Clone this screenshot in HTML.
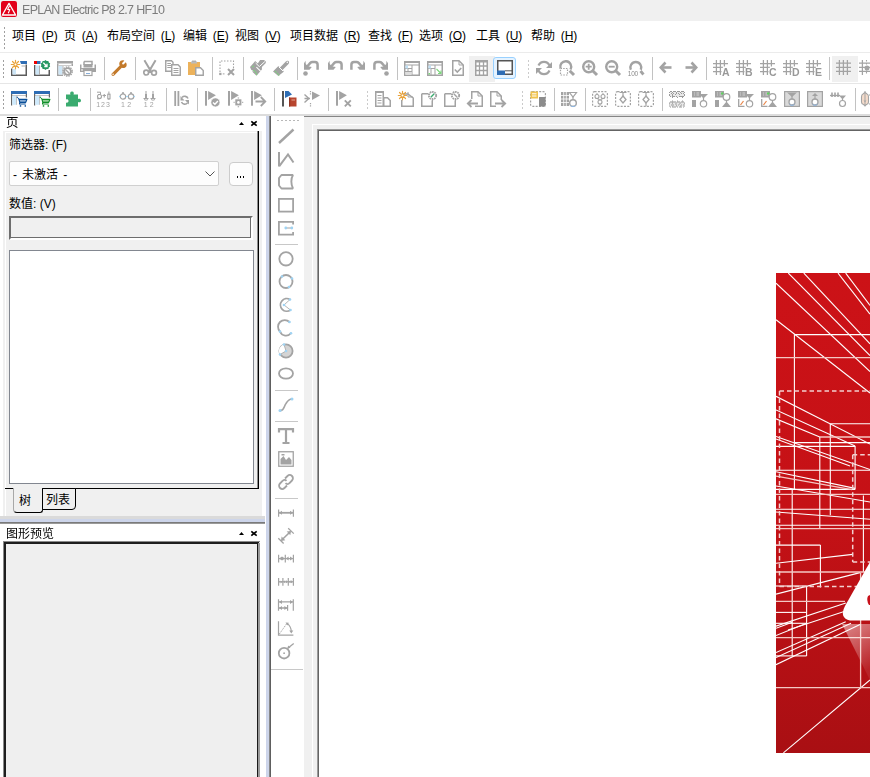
<!DOCTYPE html>
<html lang="zh-CN">
<head>
<meta charset="utf-8">
<style>
html,body{margin:0;padding:0}
body{width:870px;height:777px;overflow:hidden;position:relative;background:#fff;font-family:"Liberation Sans",sans-serif;font-size:12px;color:#000}
.a{position:absolute}
.t{position:absolute;white-space:nowrap;line-height:14px}
.sep{position:absolute;width:1px;background:#c2c2c2}
.grip{position:absolute;width:1px;background-image:linear-gradient(#a0a0a0 40%,transparent 40%);background-size:1px 4px}
.hgrip{position:absolute;height:1px;background-image:linear-gradient(90deg,#b8b8b8 40%,transparent 40%);background-size:4px 1px}
svg{position:absolute;overflow:visible}
.nolcd{will-change:transform}
</style>
</head>
<body>
<div class="a" style="left:0px;top:0px;width:870px;height:21px;background:#f0f0f0;"></div>
<svg style="left:1px;top:1px" width="16" height="16" viewBox="0 0 16 16">
<rect x="0" y="0" width="16" height="16" rx="2.2" fill="#e2001a"/>
<path d="M8 2.4 L14.6 14 L1.4 14 Z" fill="none" stroke="#fff" stroke-width="1.3" stroke-linejoin="round"/>
<path d="M8.6 4.8 L6.7 8.3 L8.7 8.6 L7.3 12.2" fill="none" stroke="#fff" stroke-width="1.1"/>
</svg>
<div class="t" style="left:22px;top:3px;font-size:12.5px;color:#7c7c7c;letter-spacing:-0.65px;will-change:transform">EPLAN Electric P8 2.7 HF10</div>
<div class="a" style="left:0px;top:52px;width:870px;height:1px;background:#ebebeb;"></div>
<div class="grip" style="left:4px;top:27px;height:22px"></div>
<div class="t" style="left:12.3px;top:29px;word-spacing:2px">项目 (<u>P</u>)</div>
<div class="t" style="left:64.3px;top:29px;word-spacing:2px">页 (<u>A</u>)</div>
<div class="t" style="left:107.3px;top:29px;word-spacing:2px">布局空间 (<u>L</u>)</div>
<div class="t" style="left:183.3px;top:29px;word-spacing:2px">编辑 (<u>E</u>)</div>
<div class="t" style="left:235.3px;top:29px;word-spacing:2px">视图 (<u>V</u>)</div>
<div class="t" style="left:290.3px;top:29px;word-spacing:2px">项目数据 (<u>R</u>)</div>
<div class="t" style="left:368.3px;top:29px;word-spacing:2px">查找 (<u>F</u>)</div>
<div class="t" style="left:419.3px;top:29px;word-spacing:2px">选项 (<u>O</u>)</div>
<div class="t" style="left:476.3px;top:29px;word-spacing:2px">工具 (<u>U</u>)</div>
<div class="t" style="left:531.3px;top:29px;word-spacing:2px">帮助 (<u>H</u>)</div>
<div class="a" style="left:0px;top:83px;width:870px;height:1px;background:#e6e6e6;"></div>
<div class="a" style="left:0px;top:114px;width:870px;height:2px;background:#dcdcdc;"></div>
<div class="grip" style="left:3px;top:60px;height:20px"></div>
<div class="grip" style="left:3px;top:91px;height:20px"></div>
<div class="a" style="left:469px;top:56px;width:26px;height:26px;background:#f0f0f0;"></div>
<div class="a" style="left:493px;top:57px;width:23px;height:22px;background:#e5f3ff;border:1px solid #99d1ff;border-radius:3px;box-sizing:border-box"></div>
<div class="a" style="left:832px;top:56px;width:26px;height:26px;background:#f0f0f0;"></div>
<svg class="nolcd" style="left:11px;top:60px" width="16" height="16" viewBox="0 0 16 16">
<path d="M0.75 8.5V15.25H15.25V4.5" fill="none" stroke="#5c5c5c" stroke-width="1.5"/>
<rect x="1.5" y="9" width="3.5" height="5.5" fill="#cde6f7"/>
<path d="M9 1H16V4H10Z" fill="#2e6db4"/>
<rect x="10.5" y="5.5" width="4.5" height="1" fill="#b0b0b0"/>
<g stroke="#e9a33b" stroke-width="1.2" stroke-linecap="round">
<path d="M4.5 0.3V8.7M0.3 4.5H8.7M1.5 1.5L7.5 7.5M7.5 1.5L1.5 7.5"/></g>
<circle cx="4.5" cy="4.5" r="1.4" fill="#fff" stroke="#e9a33b" stroke-width="1"/>
</svg>
<svg class="nolcd" style="left:34px;top:60px" width="16" height="16" viewBox="0 0 16 16">
<path d="M0.75 5V15.25H15.25V10" fill="none" stroke="#5c5c5c" stroke-width="1.5"/>
<rect x="1.5" y="5.5" width="3.5" height="9" fill="#cde6f7"/>
<rect x="5" y="5.5" width="1" height="9" fill="#b0b0b0"/>
<rect x="0" y="1" width="3" height="3" fill="#ee0000"/>
<rect x="3" y="1" width="3.5" height="3" fill="#2e6db4"/>
<path d="M11.5 0 L12.7 1 L14.4 0.9 L14.8 2.5 L16.2 3.4 L15.6 5 L16.2 6.6 L14.8 7.5 L14.4 9.1 L12.7 9 L11.5 10 L10.3 9 L8.6 9.1 L8.2 7.5 L6.8 6.6 L7.4 5 L6.8 3.4 L8.2 2.5 L8.6 0.9 L10.3 1Z" fill="#279862"/>
<path d="M9.3 2.8L13 6.5M13 3.8V6.5H10.3" fill="none" stroke="#fff" stroke-width="1.3"/>
</svg>
<svg class="nolcd" style="left:57px;top:60px" width="16" height="16" viewBox="0 0 16 16">
<rect x="0" y="1" width="16" height="2.5" fill="#a3a3a3"/>
<path d="M0.75 3.5V15.25H6M15.25 3.5V6" fill="none" stroke="#a3a3a3" stroke-width="1.5"/>
<rect x="1.5" y="6" width="4" height="8.5" fill="#cde6f7"/>
<rect x="5.5" y="6" width="1" height="8.5" fill="#b8b8b8"/>
<rect x="1.5" y="5" width="13" height="0.8" fill="#c0c0c0"/>
<circle cx="10.6" cy="11.5" r="4.6" fill="none" stroke="#a3a3a3" stroke-width="1.4" stroke-dasharray="1.5 0.9"/>
<circle cx="10.6" cy="11.5" r="3.3" fill="#fff" stroke="#a3a3a3" stroke-width="1.8"/>
<path d="M9 10L12.2 13.2" stroke="#a3a3a3" stroke-width="1.3"/>
</svg>
<svg class="nolcd" style="left:80px;top:60px" width="16" height="16" viewBox="0 0 16 16">
<path d="M4 1.5H12V5" fill="none" stroke="#a3a3a3" stroke-width="1.5"/><path d="M4 1.5V5" stroke="#a3a3a3" stroke-width="1.5"/>
<rect x="3.5" y="4" width="9" height="3.5" fill="#a3a3a3"/>
<rect x="0" y="4.5" width="1.5" height="7.5" fill="#a3a3a3"/><rect x="14.5" y="4.5" width="1.5" height="7.5" fill="#a3a3a3"/>
<rect x="0" y="8" width="16" height="4" fill="#a3a3a3"/>
<rect x="1" y="9.5" width="2" height="1" fill="#fff"/>
<rect x="4" y="10.5" width="8" height="5" fill="#fff" stroke="#a3a3a3" stroke-width="1.2"/>
<rect x="6" y="13" width="4" height="0.8" fill="#6a9ad0"/>
</svg>
<div class="sep" style="left:104px;top:57px;height:23px"></div>
<svg class="nolcd" style="left:111px;top:60px" width="16" height="16" viewBox="0 0 16 16">
<path d="M14.8 2.2 L12.6 4.4 L11.3 4.2 L11.1 2.9 L13.3 0.7 C11.5 -0.2 9.2 0.6 8.5 2.6 C8.1 3.6 8.3 4.7 8.7 5.5 L1 13.2 C0.3 13.9 0.3 15 1 15.5 C1.6 16.1 2.6 16 3.2 15.4 L10.8 7.7 C11.7 8.1 12.8 8.2 13.8 7.8 C15.7 7 16.4 4.2 14.8 2.2Z" fill="#c37a2b"/>
<circle cx="2.1" cy="14.3" r="0.8" fill="#fff"/>
</svg>
<div class="sep" style="left:135px;top:57px;height:23px"></div>
<svg class="nolcd" style="left:142px;top:60px" width="16" height="16" viewBox="0 0 16 16">
<path d="M2.4 0.3 L7.3 8.5 M13.6 0.3 L8.7 8.5" stroke="#a3a3a3" stroke-width="2"/>
<rect x="6.6" y="7.5" width="2.9" height="5.5" fill="#a3a3a3"/>
<circle cx="4.2" cy="12.6" r="2.4" fill="none" stroke="#a3a3a3" stroke-width="1.7"/>
<circle cx="12" cy="12.7" r="2.4" fill="none" stroke="#a3a3a3" stroke-width="1.7"/>
</svg>
<svg class="nolcd" style="left:165px;top:60px" width="16" height="16" viewBox="0 0 16 16">
<path d="M0.75 0.75H6.5L8 2.3V11.25H0.75Z" fill="#fff" stroke="#a3a3a3" stroke-width="1.4"/>
<path d="M2.3 3.5H6M2.3 5.5H6M2.3 7.5H6" stroke="#a3a3a3" stroke-width="1"/>
<path d="M6.75 4.75H13L15.25 7V15.25H6.75Z" fill="#fff" stroke="#a3a3a3" stroke-width="1.4"/>
<path d="M8.5 8.5H13.5M8.5 10.5H13.5M8.5 12.5H13.5" stroke="#a3a3a3" stroke-width="1"/>
</svg>
<svg class="nolcd" style="left:188px;top:60px" width="16" height="16" viewBox="0 0 16 16">
<rect x="0" y="2" width="12" height="13" fill="#ecb25b"/>
<path d="M4 1.3H8" stroke="#a3a3a3" stroke-width="1.4"/>
<rect x="3" y="1.5" width="6" height="2" fill="#bbb"/>
<path d="M7.75 7.75H12.5L15.25 10.5V15.25H7.75Z" fill="#fff" stroke="#a3a3a3" stroke-width="1.4"/>
</svg>
<div class="sep" style="left:212px;top:57px;height:23px"></div>
<svg class="nolcd" style="left:219px;top:60px" width="16" height="16" viewBox="0 0 16 16">
<path d="M1 12V1H14.5V8" fill="none" stroke="#a3a3a3" stroke-width="1.1" stroke-dasharray="1.5 1.5"/>
<rect x="0.2" y="12.8" width="2.3" height="2.3" fill="#a3a3a3"/>
<path d="M3.8 13.9H5.5" stroke="#a3a3a3" stroke-width="1"/>
<path d="M9 9L15 15M15 9L9 15" stroke="#a3a3a3" stroke-width="2"/>
</svg>
<div class="sep" style="left:243px;top:57px;height:23px"></div>
<svg class="nolcd" style="left:250px;top:60px" width="16" height="16" viewBox="0 0 16 16">
<path d="M0 7 L4.4 2.1 L5.2 1.1 L7.8 3.6 L10.1 0 L14 0 L15.8 1.6 L15.8 3.1 L11.9 7 L11.9 9.6 L6.5 15.8 L2.8 12.2 L2.2 10.5 L1.2 9.8Z" fill="#a3a3a3"/>
<path d="M5.6 3 L9.3 6.6 L14.8 1.6" fill="none" stroke="#fff" stroke-width="1"/>
<path d="M6.4 7.2 L10.8 11.3" stroke="#fff" stroke-width="1.1"/>
<path d="M2 10.2 L3.3 11.5" stroke="#fff" stroke-width="0.6"/>
<rect x="2.3" y="5.8" width="1.5" height="1.3" fill="#7cd67c"/><rect x="3.3" y="10" width="1.5" height="1.3" fill="#7cd67c"/><rect x="5" y="11.5" width="1.2" height="1.5" fill="#7cd67c"/><rect x="6" y="13.5" width="1.2" height="1.5" fill="#7cd67c"/>
</svg>
<svg class="nolcd" style="left:273px;top:60px" width="16" height="16" viewBox="0 0 16 16">
<path d="M0 11.5 L5.4 6 L11 11.5 L5.4 16Z" fill="#a3a3a3"/>
<path d="M6.5 8 L9 10.5 L15.5 4 C16.5 3 16.3 1.2 15 0.8 C14 0.5 13.3 1 12.8 1.5Z" fill="#a3a3a3"/>
<path d="M5.8 6.8 L10.2 11.2" stroke="#fff" stroke-width="1"/>
<circle cx="14.3" cy="2.3" r="0.8" fill="#fff"/>
<rect x="2" y="11" width="1.3" height="1.3" fill="#7cd67c"/><rect x="3.8" y="12.8" width="1.3" height="1.3" fill="#7cd67c"/><rect x="5.2" y="14.4" width="1.2" height="1.2" fill="#7cd67c"/>
</svg>
<div class="sep" style="left:297px;top:57px;height:23px"></div>
<svg class="nolcd" style="left:303px;top:60px" width="16" height="16" viewBox="0 0 16 16"><path d="M1 3.2 L2.5 0.8 L2.8 4 L4.8 6.3 L8.8 7 L6.5 9.8 L1 9.8Z" fill="#a3a3a3"/>
<path d="M4 6.8 L7.3 2.9 Q8.2 2 9.5 2 H12 Q14.6 2 14.6 4.8 V9.8" fill="none" stroke="#a3a3a3" stroke-width="2.5"/><circle cx="2.5" cy="13.5" r="2.3" fill="#a3a3a3"/></svg>
<svg class="nolcd" style="left:327px;top:60px" width="16" height="16" viewBox="0 0 16 16"><path d="M1 3.2 L2.5 0.8 L2.8 4 L4.8 6.3 L8.8 7 L6.5 9.8 L1 9.8Z" fill="#a3a3a3"/>
<path d="M4 6.8 L7.3 2.9 Q8.2 2 9.5 2 H12 Q14.6 2 14.6 4.8 V9.8" fill="none" stroke="#a3a3a3" stroke-width="2.5"/></svg>
<svg class="nolcd" style="left:350px;top:60px" width="16" height="16" viewBox="0 0 16 16"><g transform="translate(16,0) scale(-1,1)"><path d="M1 3.2 L2.5 0.8 L2.8 4 L4.8 6.3 L8.8 7 L6.5 9.8 L1 9.8Z" fill="#a3a3a3"/>
<path d="M4 6.8 L7.3 2.9 Q8.2 2 9.5 2 H12 Q14.6 2 14.6 4.8 V9.8" fill="none" stroke="#a3a3a3" stroke-width="2.5"/></g></svg>
<svg class="nolcd" style="left:373px;top:60px" width="16" height="16" viewBox="0 0 16 16"><g transform="translate(16,0) scale(-1,1)"><path d="M1 3.2 L2.5 0.8 L2.8 4 L4.8 6.3 L8.8 7 L6.5 9.8 L1 9.8Z" fill="#a3a3a3"/>
<path d="M4 6.8 L7.3 2.9 Q8.2 2 9.5 2 H12 Q14.6 2 14.6 4.8 V9.8" fill="none" stroke="#a3a3a3" stroke-width="2.5"/><circle cx="2.5" cy="13.5" r="2.3" fill="#a3a3a3"/></g></svg>
<div class="sep" style="left:397px;top:57px;height:23px"></div>
<svg class="nolcd" style="left:404px;top:60px" width="16" height="16" viewBox="0 0 16 16">
<rect x="0.75" y="1.75" width="14.5" height="13.5" fill="#fff" stroke="#a3a3a3" stroke-width="1.5"/>
<rect x="0" y="1" width="16" height="2" fill="#a3a3a3"/>
<path d="M1 5H15M1 8.5H8M8 5V15M4 8.5V15M1 11.5H8" stroke="#a3a3a3" stroke-width="1"/>
<rect x="1.5" y="5.5" width="2.5" height="3" fill="#bfe0f5"/><rect x="1.5" y="12" width="6" height="3" fill="#ddd"/>
</svg>
<svg class="nolcd" style="left:427px;top:60px" width="16" height="16" viewBox="0 0 16 16">
<rect x="0.75" y="1.75" width="14.5" height="13.5" fill="#fff" stroke="#a3a3a3" stroke-width="1.5"/>
<rect x="0" y="1" width="16" height="2" fill="#a3a3a3"/>
<path d="M1 5H15M1 8.5H8M8 5V15M4 8.5V15" stroke="#a3a3a3" stroke-width="1"/>
<rect x="1.5" y="5.5" width="2.5" height="3" fill="#bfe0f5"/>
<path d="M9.5 9 L14 13.5 M14 10.5V13.5H11" fill="none" stroke="#7cd67c" stroke-width="1.1"/>
<rect x="1.5" y="13" width="1.5" height="1.5" fill="#7cd67c"/>
</svg>
<svg class="nolcd" style="left:450px;top:60px" width="16" height="16" viewBox="0 0 16 16">
<path d="M2.75 0.75H9L13.25 5V15.25H2.75Z" fill="#fff" stroke="#a3a3a3" stroke-width="1.5"/>
<path d="M9 1V5H13" fill="none" stroke="#a3a3a3" stroke-width="1"/>
<path d="M4.8 9.5L7.3 12L11.3 8" fill="none" stroke="#a3a3a3" stroke-width="1.6"/>
</svg>
<svg class="nolcd" style="left:475px;top:60px" width="16" height="16" viewBox="0 0 16 16">
<rect x="0" y="0" width="13" height="2" fill="#a3a3a3"/>
<rect x="0.75" y="1.75" width="11.5" height="13.5" fill="#fff" stroke="#a3a3a3" stroke-width="1.5"/>
<path d="M1 6H12M1 10.5H12M4.5 2V15M8.5 2V15" stroke="#a3a3a3" stroke-width="1.3"/>
</svg>
<svg class="nolcd" style="left:497px;top:60px" width="16" height="16" viewBox="0 0 16 16">
<rect x="0.75" y="0.75" width="14.5" height="13.5" fill="#fff" stroke="#555" stroke-width="1.5"/>
<rect x="0" y="10.5" width="8" height="4.5" fill="#2e6db4"/>
<path d="M8 10.8H15.5" stroke="#555" stroke-width="1"/>
</svg>
<div class="grip" style="left:528px;top:60px;height:20px;opacity:0.55"></div>
<svg class="nolcd" style="left:536px;top:60px" width="16" height="16" viewBox="0 0 16 16">
<path d="M13.5 5.5 A6 6 0 0 0 2.5 5.5" fill="none" stroke="#a3a3a3" stroke-width="2.2"/>
<path d="M2.5 10.5 A6 6 0 0 0 13.5 10.5" fill="none" stroke="#a3a3a3" stroke-width="2.2"/>
<path d="M16 2 V8 H10Z" fill="#a3a3a3"/><path d="M0 14 V8 H6Z" fill="#a3a3a3"/>
</svg>
<svg class="nolcd" style="left:559px;top:60px" width="16" height="16" viewBox="0 0 16 16">
<path d="M1.5 8.5 A5.5 5.5 0 1 1 11.5 9.5" fill="none" stroke="#a3a3a3" stroke-width="2.4"/>
<path d="M10.7 10.7L15 15" stroke="#a3a3a3" stroke-width="3"/>
<rect x="1.5" y="8.5" width="7" height="6.5" fill="#fff" stroke="#a3a3a3" stroke-width="1.2" stroke-dasharray="1.5 1.2"/>
</svg>
<svg class="nolcd" style="left:582px;top:60px" width="16" height="16" viewBox="0 0 16 16">
<circle cx="6.7" cy="6.7" r="5.5" fill="none" stroke="#a3a3a3" stroke-width="2.4"/>
<path d="M10.7 10.7L15 15" stroke="#a3a3a3" stroke-width="3"/>
<path d="M3.7 6.7H9.7M6.7 3.7V9.7" stroke="#a3a3a3" stroke-width="1.8"/>
</svg>
<svg class="nolcd" style="left:605px;top:60px" width="16" height="16" viewBox="0 0 16 16">
<circle cx="6.7" cy="6.7" r="5.5" fill="none" stroke="#a3a3a3" stroke-width="2.4"/>
<path d="M10.7 10.7L15 15" stroke="#a3a3a3" stroke-width="3"/>
<path d="M3.7 6.7H9.7" stroke="#a3a3a3" stroke-width="1.8"/>
</svg>
<svg class="nolcd" style="left:628px;top:60px" width="16" height="16" viewBox="0 0 16 16">
<path d="M2.8 9.8 A5.5 5.5 0 1 1 12.8 9.8" fill="none" stroke="#a3a3a3" stroke-width="2.4"/>
<path d="M12.5 11L15.5 14.5" stroke="#a3a3a3" stroke-width="2.8"/>
<text x="-0.2" y="15.8" font-family="Liberation Sans" font-size="6.5" fill="#8a8a8a" letter-spacing="-0.3">100</text>
</svg>
<div class="sep" style="left:652px;top:57px;height:23px"></div>
<svg class="nolcd" style="left:659px;top:61px" width="16" height="16" viewBox="0 0 16 16"><path d="M6.5 1.5L1.8 6.5L6.5 11.5" fill="none" stroke="#a3a3a3" stroke-width="2.6"/><path d="M2.5 6.5H12.5" stroke="#a3a3a3" stroke-width="2.6"/></svg>
<svg class="nolcd" style="left:682px;top:61px" width="16" height="16" viewBox="0 0 16 16"><path d="M9.5 1.5L14.2 6.5L9.5 11.5" fill="none" stroke="#a3a3a3" stroke-width="2.6"/><path d="M13.5 6.5H3.5" stroke="#a3a3a3" stroke-width="2.6"/></svg>
<div class="sep" style="left:706px;top:57px;height:23px"></div>
<svg class="nolcd" style="left:712px;top:60px" width="16" height="16" viewBox="0 0 16 16">
<path d="M1 3.5H16M1 7.4H11M1 11.5H10M4.4 0V15M8.4 0V15M12.4 0V6.6" stroke="#a3a3a3" stroke-width="1.25"/>
<rect x="9.5" y="7.8" width="8" height="8.5" fill="#fff"/>
<text x="10" y="16.2" font-family="Liberation Sans" font-weight="bold" font-size="10.5" fill="#999">A</text>
</svg>
<svg class="nolcd" style="left:735px;top:60px" width="16" height="16" viewBox="0 0 16 16">
<path d="M1 3.5H16M1 7.4H11M1 11.5H10M4.4 0V15M8.4 0V15M12.4 0V6.6" stroke="#a3a3a3" stroke-width="1.25"/>
<rect x="9.5" y="7.8" width="8" height="8.5" fill="#fff"/>
<text x="10" y="16.2" font-family="Liberation Sans" font-weight="bold" font-size="10.5" fill="#999">B</text>
</svg>
<svg class="nolcd" style="left:759px;top:60px" width="16" height="16" viewBox="0 0 16 16">
<path d="M1 3.5H16M1 7.4H11M1 11.5H10M4.4 0V15M8.4 0V15M12.4 0V6.6" stroke="#a3a3a3" stroke-width="1.25"/>
<rect x="9.5" y="7.8" width="8" height="8.5" fill="#fff"/>
<text x="10" y="16.2" font-family="Liberation Sans" font-weight="bold" font-size="10.5" fill="#999">C</text>
</svg>
<svg class="nolcd" style="left:782px;top:60px" width="16" height="16" viewBox="0 0 16 16">
<path d="M1 3.5H16M1 7.4H11M1 11.5H10M4.4 0V15M8.4 0V15M12.4 0V6.6" stroke="#a3a3a3" stroke-width="1.25"/>
<rect x="9.5" y="7.8" width="8" height="8.5" fill="#fff"/>
<text x="10" y="16.2" font-family="Liberation Sans" font-weight="bold" font-size="10.5" fill="#999">D</text>
</svg>
<svg class="nolcd" style="left:805px;top:60px" width="16" height="16" viewBox="0 0 16 16">
<path d="M1 3.5H16M1 7.4H11M1 11.5H10M4.4 0V15M8.4 0V15M12.4 0V6.6" stroke="#a3a3a3" stroke-width="1.25"/>
<rect x="9.5" y="7.8" width="8" height="8.5" fill="#fff"/>
<text x="10" y="16.2" font-family="Liberation Sans" font-weight="bold" font-size="10.5" fill="#999">E</text>
</svg>
<div class="sep" style="left:829px;top:57px;height:23px"></div>
<svg class="nolcd" style="left:836px;top:60px" width="16" height="16" viewBox="0 0 16 16"><path d="M0 3.2H15M0 7.3H15M0 11.4H15M3.4 0V15M7.4 0V15M11.4 0V15" stroke="#a3a3a3" stroke-width="1.25"/></svg>
<svg class="nolcd" style="left:859px;top:60px" width="16" height="16" viewBox="0 0 16 16"><path d="M0 3.2H11M0 7.3H11M0 11.4H11M3.4 0V15" stroke="#a3a3a3" stroke-width="1.25"/><path d="M7.5 0V15" stroke="#a3a3a3" stroke-width="1.1" stroke-dasharray="1.5 1.5"/><circle cx="8" cy="8" r="2.5" fill="#a3a3a3"/></svg>
<svg class="nolcd" style="left:11px;top:91px" width="16" height="16" viewBox="0 0 16 16">
<rect x="0" y="0" width="16" height="3" fill="#2e6db4"/>
<rect x="1" y="4" width="14" height="0.7" fill="#aaa"/>
<path d="M0.6 3V14.5M15.4 3V6.5" stroke="#666" stroke-width="1.2"/>
<rect x="1.2" y="4.8" width="3.8" height="9" fill="#cfeafc"/>
<rect x="5" y="4.8" width="0.7" height="9" fill="#aaa"/>
<path d="M6 6 L8 8" stroke="#0b4f98" stroke-width="1.3" stroke-dasharray="1 0.7"/>
<path d="M8 8.4 H15.9 L14.7 11.4 H8.8 Z" fill="#88acd4" stroke="#0b4f98" stroke-width="1.2" stroke-linejoin="round"/>
<path d="M8.6 11.5 V13 H14.7" fill="none" stroke="#0b4f98" stroke-width="1.2"/>
<rect x="8.8" y="14.2" width="1.4" height="1.5" fill="#0b4f98"/><rect x="13.6" y="14.2" width="1.4" height="1.5" fill="#0b4f98"/>
</svg>
<svg class="nolcd" style="left:34px;top:91px" width="16" height="16" viewBox="0 0 16 16">
<rect x="0" y="0" width="16" height="3" fill="#2e6db4"/>
<rect x="1" y="4" width="14" height="0.7" fill="#aaa"/>
<path d="M0.6 3V14.5M15.4 3V6.5" stroke="#666" stroke-width="1.2"/>
<rect x="1.2" y="4.8" width="3.8" height="9" fill="#cfeafc"/>
<rect x="5" y="4.8" width="0.7" height="9" fill="#aaa"/>
<path d="M6 6 L8 8" stroke="#11902a" stroke-width="1.3" stroke-dasharray="1 0.7"/>
<path d="M8 8.4 H15.9 L14.7 11.4 H8.8 Z" fill="#8fcf95" stroke="#11902a" stroke-width="1.2" stroke-linejoin="round"/>
<path d="M8.6 11.5 V13 H14.7" fill="none" stroke="#11902a" stroke-width="1.2"/>
<rect x="8.8" y="14.2" width="1.4" height="1.5" fill="#11902a"/><rect x="13.6" y="14.2" width="1.4" height="1.5" fill="#11902a"/>
</svg>
<div class="sep" style="left:58px;top:88px;height:23px"></div>
<svg class="nolcd" style="left:65px;top:91px" width="16" height="16" viewBox="0 0 16 16">
<path d="M1 3.5 H5.5 C4.8 2.5 5 0.5 7 0.5 C9 0.5 9.2 2.5 8.5 3.5 H13 V8 C14 7.3 16 7.5 16 9.5 C16 11.5 14 11.7 13 11 V15.5 H1 V11.5 C2 12 3.5 11.7 3.5 10 C3.5 8.3 2 8 1 8.5 Z" fill="#3aab6f"/>
</svg>
<div class="sep" style="left:90px;top:88px;height:23px"></div>
<svg class="nolcd" style="left:96px;top:91px" width="16" height="16" viewBox="0 0 16 16">
<path d="M1 1.2H4.5V3.5M2 3.5H4.5M1 7.8H3.5" fill="none" stroke="#a3a3a3" stroke-width="1"/>
<circle cx="3.5" cy="5.5" r="2" fill="none" stroke="#a3a3a3" stroke-width="1.1"/>
<path d="M6.5 4.5H10M8.25 3V6.5" stroke="#a3a3a3" stroke-width="1.1"/>
<rect x="11.8" y="3.2" width="2.2" height="4.6" fill="none" stroke="#a3a3a3" stroke-width="1.1"/>
<path d="M12.9 0.5V3.2M12.9 7.8V9" stroke="#a3a3a3" stroke-width="1"/>
<text x="0.3" y="16" font-family="Liberation Sans" font-size="7" fill="#a3a3a3" letter-spacing="0.9">123</text>
</svg>
<svg class="nolcd" style="left:119px;top:91px" width="16" height="16" viewBox="0 0 16 16">
<circle cx="4" cy="5.5" r="2.7" fill="#fff" stroke="#a3a3a3" stroke-width="1.2"/>
<circle cx="12" cy="5.5" r="2.7" fill="#fff" stroke="#a3a3a3" stroke-width="1.2"/>
<path d="M4 1V3M12 1V3" stroke="#a3a3a3" stroke-width="1.5"/>
<path d="M7 5.5H9" stroke="#9fd4f5" stroke-width="1"/>
<circle cx="0.8" cy="5.5" r="0.8" fill="#9fd4f5"/><circle cx="15.2" cy="5.5" r="0.8" fill="#9fd4f5"/>
<text x="2" y="16" font-family="Liberation Sans" font-size="7" fill="#a3a3a3" letter-spacing="2.3">12</text>
</svg>
<svg class="nolcd" style="left:143px;top:91px" width="16" height="16" viewBox="0 0 16 16">
<path d="M3 0V3M10 0V3" stroke="#a3a3a3" stroke-width="1"/>
<rect x="2" y="3" width="2" height="4" fill="#a3a3a3"/><rect x="9" y="3" width="2" height="4" fill="#a3a3a3"/>
<path d="M0.5 7.5H5.5M7.5 7.5H12.5" stroke="#a3a3a3" stroke-width="1"/>
<path d="M1 8.5 Q3 10 5 8.5M8 8.5 Q10 10 12 8.5" fill="none" stroke="#a3a3a3" stroke-width="0.9"/>
<text x="0.8" y="16" font-family="Liberation Sans" font-size="7" fill="#a3a3a3" letter-spacing="2">12</text>
</svg>
<div class="sep" style="left:166px;top:88px;height:23px"></div>
<svg class="nolcd" style="left:174px;top:91px" width="16" height="16" viewBox="0 0 16 16">
<rect x="0.3" y="0" width="1.8" height="15" fill="#a3a3a3"/><rect x="3.5" y="0" width="1.8" height="15" fill="#a3a3a3"/>
<path d="M14 7.5 A3.6 3.6 0 0 0 8 6.5" fill="none" stroke="#a3a3a3" stroke-width="1.6"/>
<path d="M7.5 11 A3.6 3.6 0 0 0 13.5 12" fill="none" stroke="#a3a3a3" stroke-width="1.6"/>
<path d="M6.5 5V9.5H10.5Z" fill="#a3a3a3"/><path d="M15 13.5V9H11Z" fill="#a3a3a3"/>
</svg>
<div class="sep" style="left:197px;top:88px;height:23px"></div>
<svg class="nolcd" style="left:205px;top:91px" width="16" height="16" viewBox="0 0 16 16"><rect x="0" y="0" width="2" height="14.7" fill="#a3a3a3"/>
<path d="M3.1 0 L10.9 4.3 L3.1 8.9Z" fill="#a3a3a3"/><circle cx="10.4" cy="11.4" r="4.5" fill="#a3a3a3" stroke="#fff" stroke-width="0.6"/>
<path d="M8 11.5L9.9 13.3L12.9 10" fill="none" stroke="#fff" stroke-width="1.4"/></svg>
<svg class="nolcd" style="left:228px;top:91px" width="16" height="16" viewBox="0 0 16 16"><rect x="0" y="0" width="2" height="14.7" fill="#a3a3a3"/>
<path d="M3.1 0 L10.9 4.3 L3.1 8.9Z" fill="#a3a3a3"/><rect x="7" y="8" width="6.8" height="6.8" fill="#a3a3a3" stroke="#fff" stroke-width="0.6"/>
<path d="M10.4 6.6V16.2M5.6 11.4H15.2" stroke="#a3a3a3" stroke-width="1.4" stroke-dasharray="1 7.6"/>
<circle cx="10.4" cy="11.4" r="1.3" fill="#fff"/></svg>
<svg class="nolcd" style="left:251px;top:91px" width="16" height="16" viewBox="0 0 16 16"><rect x="0" y="0" width="2" height="14.7" fill="#a3a3a3"/>
<path d="M3.1 0 L10.9 4.3 L3.1 8.9Z" fill="#a3a3a3"/><path d="M9.8 6 L14.3 10.5 L9.8 15M14 10.5H4.5" fill="none" stroke="#fff" stroke-width="3.4"/><path d="M9.8 6 L14.3 10.5 L9.8 15M14 10.5H4.5" fill="none" stroke="#a3a3a3" stroke-width="1.8"/></svg>
<div class="sep" style="left:274px;top:88px;height:23px"></div>
<svg class="nolcd" style="left:282px;top:91px" width="16" height="16" viewBox="0 0 16 16"><rect x="0" y="0" width="2" height="15.5" fill="#555"/>
<path d="M3 0 L6.5 0 L10 3.5 L3 7Z" fill="#2e6db4"/>
<rect x="6.3" y="5.8" width="8.5" height="9.7" fill="#fff"/>
<rect x="7" y="6.5" width="7.5" height="9" fill="#b8452e"/><rect x="7" y="6.5" width="1.2" height="9" fill="#8e3322"/>
<path d="M9.5 9H13" stroke="#eec0b0" stroke-width="0.8"/></svg>
<svg class="nolcd" style="left:304px;top:91px" width="16" height="16" viewBox="0 0 16 16">
<path d="M6.5 0V3.5M6.5 12V16" stroke="#a3a3a3" stroke-width="1.2" stroke-dasharray="1.3 1"/>
<path d="M0.5 3.5L4.8 7.5L0.5 11.5" fill="none" stroke="#a3a3a3" stroke-width="1.4"/>
<path d="M0.5 7.5H6" stroke="#a3a3a3" stroke-width="1.5"/>
<path d="M8 0.5L16 4.5L8 9Z" fill="#a3a3a3"/>
</svg>
<div class="sep" style="left:328px;top:88px;height:23px"></div>
<svg class="nolcd" style="left:336px;top:91px" width="16" height="16" viewBox="0 0 16 16"><rect x="0" y="0" width="2" height="14.7" fill="#a3a3a3"/>
<path d="M3.1 0 L10.9 4.3 L3.1 8.9Z" fill="#a3a3a3"/><path d="M8.8 9.3L14.8 15.3M14.8 9.3L8.8 15.3" stroke="#fff" stroke-width="3.4"/><path d="M8.8 9.3L14.8 15.3M14.8 9.3L8.8 15.3" stroke="#a3a3a3" stroke-width="1.9"/></svg>
<div class="grip" style="left:367px;top:91px;height:20px;opacity:0.55"></div>
<svg class="nolcd" style="left:375px;top:91px" width="16" height="16" viewBox="0 0 16 16">
<rect x="0.75" y="0.75" width="7.5" height="14.5" fill="#fff" stroke="#a3a3a3" stroke-width="1.5"/>
<rect x="0" y="0" width="9" height="2" fill="#a3a3a3"/>
<path d="M2.5 4.5H6.5M2.5 7H6.5M2.5 9.5H6.5M2.5 12H6.5" stroke="#a3a3a3" stroke-width="1"/>
<path d="M8.75 6.75H12.5L15.25 9.5V15.25H8.75Z" fill="#fff" stroke="#a3a3a3" stroke-width="1.5"/>
</svg>
<svg class="nolcd" style="left:398px;top:91px" width="16" height="16" viewBox="0 0 16 16">
<path d="M3.75 3H10L15.25 7V15.25H3.75V9" fill="#fff" stroke="#a3a3a3" stroke-width="1.5"/>
<path d="M10 1V6H15" fill="none" stroke="#a3a3a3" stroke-width="1"/>
<g stroke="#e9a33b" stroke-width="1.2" stroke-linecap="round"><path d="M4.5 0.3V8.7M0.3 4.5H8.7M1.5 1.5L7.5 7.5M7.5 1.5L1.5 7.5"/></g>
<circle cx="4.5" cy="4.5" r="1.4" fill="#fff" stroke="#e9a33b" stroke-width="1"/>
</svg>
<svg class="nolcd" style="left:421px;top:91px" width="16" height="16" viewBox="0 0 16 16">
<path d="M0.75 2.75H7M0.75 2.75V15.25H11.25V9.5" fill="none" stroke="#a3a3a3" stroke-width="1.5"/>
<circle cx="11.5" cy="4.5" r="3.6" fill="#fff" stroke="#a3a3a3" stroke-width="2" stroke-dasharray="1.6 0.7"/>
<circle cx="11.5" cy="4.5" r="2.6" fill="#fff"/>
<path d="M9.8 6.2L13.2 2.8" stroke="#3aab6f" stroke-width="1.4"/>
<path d="M11.5 8.5V10" stroke="#a3a3a3" stroke-width="1.2"/>
</svg>
<svg class="nolcd" style="left:444px;top:91px" width="16" height="16" viewBox="0 0 16 16">
<path d="M0.75 2.75H7M0.75 2.75V15.25H11.25V9.5" fill="none" stroke="#a3a3a3" stroke-width="1.5"/>
<circle cx="11.5" cy="4.5" r="3.6" fill="#fff" stroke="#a3a3a3" stroke-width="2" stroke-dasharray="1.6 0.7"/>
<circle cx="11.5" cy="4.5" r="2.6" fill="#fff"/>
<path d="M9.8 2.8L13.2 6.2" stroke="#a3a3a3" stroke-width="1.4"/>
<path d="M11.5 8.5V10" stroke="#a3a3a3" stroke-width="1.2"/>
</svg>
<svg class="nolcd" style="left:467px;top:91px" width="16" height="16" viewBox="0 0 16 16">
<path d="M4.75 8V0.75H11L15.25 5V15.25H8" fill="none" stroke="#a3a3a3" stroke-width="1.5"/>
<path d="M11 1V5H15" fill="none" stroke="#a3a3a3" stroke-width="1"/>
<path d="M4.5 9L0.8 12.5L4.5 16M1 12.5H11" fill="none" stroke="#a3a3a3" stroke-width="1.8"/>
</svg>
<svg class="nolcd" style="left:490px;top:91px" width="16" height="16" viewBox="0 0 16 16">
<path d="M6 15.25H0.75V0.75H7L11.25 5V9" fill="none" stroke="#a3a3a3" stroke-width="1.5"/>
<path d="M7 1V5H11" fill="none" stroke="#a3a3a3" stroke-width="1"/>
<path d="M11.5 9L15.2 12.5L11.5 16M15 12.5H5" fill="none" stroke="#a3a3a3" stroke-width="1.8"/>
</svg>
<div class="grip" style="left:522px;top:91px;height:20px;opacity:0.55"></div>
<svg class="nolcd" style="left:530px;top:91px" width="16" height="16" viewBox="0 0 16 16">
<rect x="0.6" y="0.6" width="14.8" height="14.8" rx="2" fill="none" stroke="#a3a3a3" stroke-width="1.2" stroke-dasharray="2 1.3"/>
<rect x="0.5" y="0.5" width="7.5" height="7" fill="#f0c350"/>
<path d="M2 2.8H6.5M2 5H6.5" stroke="#fff" stroke-width="1"/>
<rect x="9" y="6" width="6.5" height="9.5" fill="#8c8c8c"/>
</svg>
<div class="sep" style="left:554px;top:88px;height:23px"></div>
<svg class="nolcd" style="left:561px;top:91px" width="16" height="16" viewBox="0 0 16 16">
<rect x="0" y="1" width="8" height="14" fill="#a3a3a3"/>
<path d="M0 4.5H8M0 8H8M0 11.5H8M2.7 1V15M5.3 1V15" stroke="#fff" stroke-width="0.8"/>
<path d="M8.5 1.5H15.5L12 6Z" fill="none" stroke="#a3a3a3" stroke-width="1.2"/>
<path d="M12 5V8.5" stroke="#a3a3a3" stroke-width="1.2"/>
<circle cx="12" cy="12" r="3.3" fill="#fff" stroke="#a3a3a3" stroke-width="1.4"/>
<path d="M9.5 14.5 A3.3 3.3 0 0 0 14.5 14.5" fill="none" stroke="#8cb8e8" stroke-width="1"/>
</svg>
<div class="sep" style="left:585px;top:88px;height:23px"></div>
<svg class="nolcd" style="left:592px;top:91px" width="16" height="16" viewBox="0 0 16 16"><rect x="0.6" y="0.6" width="14.8" height="14.8" rx="2" fill="none" stroke="#a3a3a3" stroke-width="1.2" stroke-dasharray="2 1.3"/><circle cx="5" cy="5.5" r="2" fill="none" stroke="#a3a3a3" stroke-width="1.1"/><circle cx="11" cy="5.5" r="2" fill="none" stroke="#a3a3a3" stroke-width="1.1"/>
<circle cx="8" cy="11" r="2" fill="none" stroke="#a3a3a3" stroke-width="1.1"/><path d="M5 2V3.5M11 2V3.5M5 7.5L8 9M11 7.5L8 9M8 13V15" stroke="#a3a3a3" stroke-width="1"/></svg>
<svg class="nolcd" style="left:615px;top:91px" width="16" height="16" viewBox="0 0 16 16"><rect x="0.6" y="0.6" width="14.8" height="14.8" rx="2" fill="none" stroke="#a3a3a3" stroke-width="1.2" stroke-dasharray="2 1.3"/><path d="M8 5L11 8.5L8 12L5 8.5Z" fill="none" stroke="#a3a3a3" stroke-width="1.3"/><path d="M4.5 1.5H11.5M8 1.5V5" stroke="#a3a3a3" stroke-width="1.2"/></svg>
<svg class="nolcd" style="left:638px;top:91px" width="16" height="16" viewBox="0 0 16 16"><rect x="0.6" y="0.6" width="14.8" height="14.8" rx="2" fill="none" stroke="#a3a3a3" stroke-width="1.2" stroke-dasharray="2 1.3"/><path d="M8 5L11 8.5L8 12L5 8.5Z" fill="none" stroke="#a3a3a3" stroke-width="1.3"/><path d="M4.5 1.5H11.5M8 1.5V5M8 12V15.5" stroke="#a3a3a3" stroke-width="1.2"/></svg>
<div class="sep" style="left:662px;top:88px;height:23px"></div>
<svg class="nolcd" style="left:669px;top:91px" width="16" height="16" viewBox="0 0 16 16"><rect x="1" y="1" width="14" height="5" fill="#e8e8e8"/><rect x="1" y="10.5" width="14" height="5" fill="#e8e8e8"/><rect x="1" y="0" width="1" height="1" fill="#9a9a9a"/><rect x="2" y="0" width="1" height="1" fill="#9a9a9a"/><rect x="4" y="0" width="1" height="1" fill="#9a9a9a"/><rect x="5" y="0" width="1" height="1" fill="#9a9a9a"/><rect x="6" y="0" width="1" height="1" fill="#9a9a9a"/><rect x="8" y="0" width="1" height="1" fill="#9a9a9a"/><rect x="9" y="0" width="1" height="1" fill="#9a9a9a"/><rect x="10" y="0" width="1" height="1" fill="#9a9a9a"/><rect x="12" y="0" width="1" height="1" fill="#9a9a9a"/><rect x="13" y="0" width="1" height="1" fill="#9a9a9a"/><rect x="14" y="0" width="1" height="1" fill="#9a9a9a"/><rect x="0" y="1" width="1" height="1" fill="#9a9a9a"/><rect x="3" y="1" width="1" height="1" fill="#9a9a9a"/><rect x="7" y="1" width="1" height="1" fill="#9a9a9a"/><rect x="11" y="1" width="1" height="1" fill="#9a9a9a"/><rect x="15" y="1" width="1" height="1" fill="#9a9a9a"/><rect x="2" y="2" width="1" height="1" fill="#9a9a9a"/><rect x="4" y="2" width="1" height="1" fill="#9a9a9a"/><rect x="7" y="2" width="1" height="1" fill="#9a9a9a"/><rect x="9" y="2" width="1" height="1" fill="#9a9a9a"/><rect x="12" y="2" width="1" height="1" fill="#9a9a9a"/><rect x="14" y="2" width="1" height="1" fill="#9a9a9a"/><rect x="0" y="3" width="1" height="1" fill="#9a9a9a"/><rect x="3" y="3" width="1" height="1" fill="#9a9a9a"/><rect x="6" y="3" width="1" height="1" fill="#9a9a9a"/><rect x="10" y="3" width="1" height="1" fill="#9a9a9a"/><rect x="15" y="3" width="1" height="1" fill="#9a9a9a"/><rect x="0" y="4" width="1" height="1" fill="#9a9a9a"/><rect x="3" y="4" width="1" height="1" fill="#9a9a9a"/><rect x="15" y="4" width="1" height="1" fill="#9a9a9a"/><rect x="1" y="5" width="1" height="1" fill="#9a9a9a"/><rect x="3" y="5" width="1" height="1" fill="#9a9a9a"/><rect x="4" y="5" width="1" height="1" fill="#9a9a9a"/><rect x="5" y="5" width="1" height="1" fill="#9a9a9a"/><rect x="7" y="5" width="1" height="1" fill="#9a9a9a"/><rect x="10" y="5" width="1" height="1" fill="#9a9a9a"/><rect x="11" y="5" width="1" height="1" fill="#9a9a9a"/><rect x="12" y="5" width="1" height="1" fill="#9a9a9a"/><rect x="13" y="5" width="1" height="1" fill="#9a9a9a"/><rect x="14" y="5" width="1" height="1" fill="#9a9a9a"/><rect x="3" y="6" width="1" height="1" fill="#9a9a9a"/><rect x="8" y="6" width="1" height="1" fill="#9a9a9a"/><rect x="13" y="6" width="1" height="1" fill="#9a9a9a"/><rect x="3" y="9.5" width="1" height="1" fill="#9a9a9a"/><rect x="8" y="9.5" width="1" height="1" fill="#9a9a9a"/><rect x="13" y="9.5" width="1" height="1" fill="#9a9a9a"/><rect x="1" y="10.5" width="1" height="1" fill="#9a9a9a"/><rect x="2" y="10.5" width="1" height="1" fill="#9a9a9a"/><rect x="3" y="10.5" width="1" height="1" fill="#9a9a9a"/><rect x="4" y="10.5" width="1" height="1" fill="#9a9a9a"/><rect x="5" y="10.5" width="1" height="1" fill="#9a9a9a"/><rect x="6" y="10.5" width="1" height="1" fill="#9a9a9a"/><rect x="8" y="10.5" width="1" height="1" fill="#9a9a9a"/><rect x="9" y="10.5" width="1" height="1" fill="#9a9a9a"/><rect x="10" y="10.5" width="1" height="1" fill="#9a9a9a"/><rect x="12" y="10.5" width="1" height="1" fill="#9a9a9a"/><rect x="13" y="10.5" width="1" height="1" fill="#9a9a9a"/><rect x="14" y="10.5" width="1" height="1" fill="#9a9a9a"/><rect x="0" y="11.5" width="1" height="1" fill="#9a9a9a"/><rect x="3" y="11.5" width="1" height="1" fill="#9a9a9a"/><rect x="7" y="11.5" width="1" height="1" fill="#9a9a9a"/><rect x="11" y="11.5" width="1" height="1" fill="#9a9a9a"/><rect x="15" y="11.5" width="1" height="1" fill="#9a9a9a"/><rect x="0" y="12.5" width="1" height="1" fill="#9a9a9a"/><rect x="3" y="12.5" width="1" height="1" fill="#9a9a9a"/><rect x="6" y="12.5" width="1" height="1" fill="#9a9a9a"/><rect x="10" y="12.5" width="1" height="1" fill="#9a9a9a"/><rect x="15" y="12.5" width="1" height="1" fill="#9a9a9a"/><rect x="2" y="13.5" width="1" height="1" fill="#9a9a9a"/><rect x="4" y="13.5" width="1" height="1" fill="#9a9a9a"/><rect x="7" y="13.5" width="1" height="1" fill="#9a9a9a"/><rect x="9" y="13.5" width="1" height="1" fill="#9a9a9a"/><rect x="12" y="13.5" width="1" height="1" fill="#9a9a9a"/><rect x="14" y="13.5" width="1" height="1" fill="#9a9a9a"/><rect x="0" y="14.5" width="1" height="1" fill="#9a9a9a"/><rect x="3" y="14.5" width="1" height="1" fill="#9a9a9a"/><rect x="7" y="14.5" width="1" height="1" fill="#9a9a9a"/><rect x="11" y="14.5" width="1" height="1" fill="#9a9a9a"/><rect x="15" y="14.5" width="1" height="1" fill="#9a9a9a"/><rect x="1" y="15.5" width="1" height="1" fill="#9a9a9a"/><rect x="3" y="15.5" width="1" height="1" fill="#9a9a9a"/><rect x="4" y="15.5" width="1" height="1" fill="#9a9a9a"/><rect x="5" y="15.5" width="1" height="1" fill="#9a9a9a"/><rect x="6" y="15.5" width="1" height="1" fill="#9a9a9a"/><rect x="8" y="15.5" width="1" height="1" fill="#9a9a9a"/><rect x="10" y="15.5" width="1" height="1" fill="#9a9a9a"/><rect x="11" y="15.5" width="1" height="1" fill="#9a9a9a"/><rect x="12" y="15.5" width="1" height="1" fill="#9a9a9a"/><rect x="14" y="15.5" width="1" height="1" fill="#9a9a9a"/></svg>
<svg class="nolcd" style="left:692px;top:91px" width="16" height="16" viewBox="0 0 16 16"><rect x="0" y="0" width="9" height="6.5" fill="#a3a3a3"/><path d="M2 2H3M2 4H3M4.5 2H7M4.5 4H7" stroke="#d8d8d8" stroke-width="0.9"/><path d="M7 3H16L11.5 7.5Z" fill="#a3a3a3"/><path d="M11.5 7V9.5" stroke="#a3a3a3" stroke-width="1.2"/><circle cx="11.5" cy="12.8" r="3.2" fill="#fff" stroke="#a3a3a3" stroke-width="1.2"/><rect x="0" y="9" width="4" height="7" fill="#a3a3a3"/></svg>
<svg class="nolcd" style="left:715px;top:91px" width="16" height="16" viewBox="0 0 16 16"><rect x="0" y="0" width="9" height="6.5" fill="#a3a3a3"/><path d="M2 2H3M2 4H3M4.5 2H7M4.5 4H7" stroke="#d8d8d8" stroke-width="0.9"/><rect x="6" y="1.5" width="2.5" height="2" fill="#5ed35e"/><circle cx="11.5" cy="6" r="3.3" fill="#fff" stroke="#a3a3a3" stroke-width="1.2"/><path d="M11.5 9.3V11" stroke="#a3a3a3" stroke-width="1.2"/><path d="M7 16L11.5 10.5L16 16Z" fill="#a3a3a3"/><rect x="0" y="9" width="4" height="7" fill="#a3a3a3"/></svg>
<svg class="nolcd" style="left:738px;top:91px" width="16" height="16" viewBox="0 0 16 16"><rect x="0" y="0" width="9" height="6.5" fill="#a3a3a3"/><path d="M2 2H3M2 4H3M4.5 2H7M4.5 4H7" stroke="#d8d8d8" stroke-width="0.9"/><path d="M7 3H16L11.5 7.5Z" fill="#a3a3a3"/><path d="M11.5 7V9.5" stroke="#a3a3a3" stroke-width="1.2"/><circle cx="11.5" cy="12.8" r="3.2" fill="#fff" stroke="#a3a3a3" stroke-width="1.2"/><path d="M0.7 8V15.3H6.5" fill="none" stroke="#a3a3a3" stroke-width="1.3"/><path d="M2.5 14L5.5 10" stroke="#e8864a" stroke-width="1.2"/></svg>
<svg class="nolcd" style="left:761px;top:91px" width="16" height="16" viewBox="0 0 16 16"><rect x="0" y="0" width="9" height="6.5" fill="#a3a3a3"/><path d="M2 2H3M2 4H3M4.5 2H7M4.5 4H7" stroke="#d8d8d8" stroke-width="0.9"/><rect x="6" y="1.5" width="2.5" height="2" fill="#5ed35e"/><circle cx="11.5" cy="6" r="3.3" fill="#fff" stroke="#a3a3a3" stroke-width="1.2"/><path d="M11.5 9.3V11" stroke="#a3a3a3" stroke-width="1.2"/><path d="M7 16L11.5 10.5L16 16Z" fill="#a3a3a3"/><path d="M0.7 8V15.3H6.5" fill="none" stroke="#a3a3a3" stroke-width="1.3"/><path d="M2.5 14L5.5 10" stroke="#e8864a" stroke-width="1.2"/></svg>
<svg class="nolcd" style="left:784px;top:91px" width="16" height="16" viewBox="0 0 16 16"><rect x="0" y="0" width="16" height="16" fill="#d9d9d9"/><rect x="0.6" y="0.6" width="14.8" height="14.8" fill="none" stroke="#a3a3a3" stroke-width="1.2"/>
<path d="M3 1.5H13L8 6Z" fill="#a3a3a3"/><path d="M8 5V8" stroke="#a3a3a3" stroke-width="1.2"/>
<circle cx="8" cy="11" r="3" fill="#fff" stroke="#a3a3a3" stroke-width="1.3"/><path d="M5.5 13 A3 3 0 0 0 10.5 13" fill="none" stroke="#8cb8e8" stroke-width="1"/></svg>
<svg class="nolcd" style="left:807px;top:91px" width="16" height="16" viewBox="0 0 16 16"><rect x="0" y="0" width="16" height="16" fill="#d9d9d9"/><rect x="0.6" y="0.6" width="14.8" height="14.8" fill="none" stroke="#a3a3a3" stroke-width="1.2"/>
<path d="M5 5L8 2L11 5Z" fill="#a3a3a3"/><path d="M8 4V8" stroke="#a3a3a3" stroke-width="1.2"/>
<circle cx="8" cy="11" r="3" fill="#fff" stroke="#a3a3a3" stroke-width="1.3"/><path d="M5.5 13 A3 3 0 0 0 10.5 13" fill="none" stroke="#8cb8e8" stroke-width="1"/></svg>
<svg class="nolcd" style="left:830px;top:91px" width="16" height="16" viewBox="0 0 16 16"><path d="M0 4.5H10" stroke="#a3a3a3" stroke-width="1.3"/><path d="M2 1.5V6M5 1.5V6M8 1.5V6" stroke="#a3a3a3" stroke-width="1.6"/>
<path d="M9 4.5H16L12.5 8.5Z" fill="#a3a3a3"/><path d="M12.5 8V10" stroke="#a3a3a3" stroke-width="1.2"/>
<circle cx="12.5" cy="12.5" r="3" fill="#fff" stroke="#a3a3a3" stroke-width="1.2"/></svg>
<div class="sep" style="left:855px;top:88px;height:23px"></div>
<svg class="nolcd" style="left:861px;top:91px" width="16" height="16" viewBox="0 0 16 16"><path d="M2 3 Q0.5 3.5 0.5 6 V11 Q0.5 13 2.5 13.5 L4 14.5 L5.5 13.5 Q7.5 13 7.5 11 V6 Q7.5 3.5 6 3 L4 1.5Z" fill="#f6dccb" stroke="#a3a3a3" stroke-width="1.1"/><path d="M4 0V15.5M2.8 9.5L4 10.5L5.2 9.5" fill="none" stroke="#a3a3a3" stroke-width="1"/><path d="M8 4H12V13H8" fill="none" stroke="#a3a3a3" stroke-width="1.2"/></svg>
<div class="t" style="left:6px;top:116px;font-size:12.5px;will-change:transform">页</div>
<svg style="left:239px;top:121px" width="20" height="7" viewBox="0 0 20 7"><path d="M0 4H5L2.5 1Z" fill="#000"/><path d="M12.3 0.4L17.7 4.6M17.7 0.4L12.3 4.6" stroke="#000" stroke-width="1.7"/></svg>
<div class="a" style="left:3px;top:131px;width:259px;height:385px;background:#f0f0f0;"></div>
<div class="a" style="left:5px;top:132px;width:1px;height:384px;background:#fff;"></div>
<div class="a" style="left:5px;top:132px;width:252px;height:1px;background:#fff;"></div>
<div class="a" style="left:262px;top:131px;width:4px;height:385px;background:#fff;"></div>
<div class="a" style="left:257px;top:131px;width:1px;height:357px;background:#8c8c8c;"></div>
<div class="a" style="left:258px;top:131px;width:1px;height:358px;background:#000;"></div>
<div class="t" style="left:9px;top:137.5px;">筛选器: (F)</div>
<div class="a" style="left:9px;top:161px;width:210px;height:25px;background:#fdfdfd;border:1px solid #d0d0d0;border-radius:2px;box-sizing:border-box"></div>
<div class="t" style="left:13px;top:168px;word-spacing:1.8px">- 未激活 -</div>
<svg style="left:205px;top:171px" width="10" height="6" viewBox="0 0 10 6"><path d="M0.5 0.5L5 5L9.5 0.5" fill="none" stroke="#555" stroke-width="1"/></svg>
<div class="a" style="left:229px;top:162px;width:24px;height:24px;background:#fdfdfd;border:1px solid #cccccc;border-radius:4px;box-sizing:border-box"></div>
<div class="a" style="left:237px;top:176px;width:1px;height:2px;background:#000;"></div>
<div class="a" style="left:240px;top:176px;width:1px;height:2px;background:#000;"></div>
<div class="a" style="left:243px;top:176px;width:1px;height:2px;background:#000;"></div>
<div class="t" style="left:9px;top:196.5px;">数值: (V)</div>
<div class="a" style="left:9px;top:216px;width:244px;height:24px;background:#f0f0f0;border-top:2px solid #6d6d6d;border-left:2px solid #6d6d6d;border-right:2px solid #fff;border-bottom:2px solid #fff;box-sizing:border-box"></div>
<div class="a" style="left:250px;top:218px;width:1px;height:20px;background:#6d6d6d;"></div>
<div class="a" style="left:11px;top:237px;width:240px;height:1px;background:#6d6d6d;"></div>
<div class="a" style="left:9px;top:250px;width:245px;height:234px;background:#fff;border:1px solid #828790;box-sizing:border-box"></div>
<div class="a" style="left:5px;top:488px;width:8px;height:1px;background:#000;"></div>
<div class="a" style="left:75px;top:488px;width:184px;height:1px;background:#000;"></div>
<div class="a" style="left:13px;top:488px;width:30px;height:25px;background:#f0f0f0;border-left:1px solid #a8a8a8;border-right:1px solid #000;border-bottom:1px solid #000;border-radius:0 0 3px 4px;box-sizing:border-box"></div>
<div class="a" style="left:42px;top:488px;width:34px;height:22px;background:#f0f0f0;border-left:1px solid #000;border-top:1px solid #000;border-right:1px solid #000;border-bottom:1px solid #000;border-radius:0 0 4px 0;box-sizing:border-box"></div>
<div class="t" style="left:19px;top:494px;">树</div>
<div class="t" style="left:46px;top:492.5px;">列表</div>
<div class="a" style="left:0px;top:516px;width:265px;height:3px;background:#dadada;"></div>
<div class="a" style="left:0px;top:519px;width:265px;height:3px;background:#cdd5ea;"></div>
<div class="a" style="left:0px;top:522px;width:265px;height:1px;background:#7a7a7a;"></div>
<div class="a" style="left:0px;top:523px;width:265px;height:1px;background:#9a9a9a;"></div>
<div class="t" style="left:6px;top:527px;will-change:transform">图形预览</div>
<svg style="left:239px;top:531px" width="20" height="7" viewBox="0 0 20 7"><path d="M0 4H5L2.5 1Z" fill="#000"/><path d="M12.3 0.4L17.7 4.6M17.7 0.4L12.3 4.6" stroke="#000" stroke-width="1.7"/></svg>
<div class="a" style="left:3px;top:541px;width:257px;height:236px;background:#efefef;"></div>
<div class="a" style="left:3px;top:541px;width:257px;height:1px;background:#8a8a8a;"></div>
<div class="a" style="left:3px;top:541px;width:1px;height:236px;background:#8a8a8a;"></div>
<div class="a" style="left:4px;top:542px;width:255px;height:2px;background:#1e1e1e;"></div>
<div class="a" style="left:4px;top:542px;width:2px;height:235px;background:#1e1e1e;"></div>
<div class="a" style="left:257px;top:543px;width:1px;height:234px;background:#1a1a1a;"></div>
<div class="a" style="left:258px;top:543px;width:2px;height:234px;background:#9a9a9a;"></div>
<div class="a" style="left:266px;top:116px;width:3px;height:661px;background:#cdd5ea;"></div>
<div class="a" style="left:269px;top:116px;width:1px;height:661px;background:#8a8a8a;"></div>
<div class="a" style="left:270px;top:116px;width:1px;height:661px;background:#5e5e5e;"></div>
<div class="hgrip" style="left:277px;top:120px;width:22px"></div>
<svg class="nolcd" style="left:278px;top:128px" width="16" height="16" viewBox="0 0 16 16"><path d="M1 15L15.5 1.5" stroke="#a3a3a3" stroke-width="2.4"/></svg>
<svg class="nolcd" style="left:278px;top:151px" width="16" height="16" viewBox="0 0 16 16"><path d="M1 1V15.5" stroke="#a3a3a3" stroke-width="2"/><path d="M1.3 15.2L10 3.5L15.5 11.5" fill="none" stroke="#a3a3a3" stroke-width="2"/></svg>
<svg class="nolcd" style="left:278px;top:174px" width="16" height="16" viewBox="0 0 16 16"><path d="M3.5 1H15 C12.8 4.5 12.8 10.5 15 14.5 H3.5 L1 11.5 V4Z" fill="none" stroke="#a3a3a3" stroke-width="1.9" stroke-linejoin="bevel"/></svg>
<svg class="nolcd" style="left:278px;top:198px" width="16" height="16" viewBox="0 0 16 16"><rect x="0.9" y="0.9" width="14.2" height="12.7" fill="none" stroke="#a3a3a3" stroke-width="1.8"/></svg>
<svg class="nolcd" style="left:278px;top:221px" width="16" height="16" viewBox="0 0 16 16"><path d="M15.1 3.5V0.9H0.9V13.6H15.1V11" fill="none" stroke="#a3a3a3" stroke-width="1.8"/><path d="M7.8 7H13.8" stroke="#a3a3a3" stroke-width="1"/><circle cx="7.8" cy="7" r="1.4" fill="#9fd3f3"/><circle cx="13.8" cy="7" r="1.4" fill="#9fd3f3"/></svg>
<div class="a" style="left:275px;top:244px;width:23px;height:1px;background:#c8c8c8;"></div>
<svg class="nolcd" style="left:278px;top:251px" width="16" height="16" viewBox="0 0 16 16"><circle cx="8" cy="7.8" r="6.7" fill="none" stroke="#a3a3a3" stroke-width="1.8"/></svg>
<svg class="nolcd" style="left:278px;top:274px" width="16" height="16" viewBox="0 0 16 16"><circle cx="8" cy="7.5" r="6.5" fill="none" stroke="#a3a3a3" stroke-width="1.8"/><circle cx="4" cy="2.5" r="1.3" fill="#9fd3f3"/><circle cx="14" cy="4.5" r="1.3" fill="#9fd3f3"/><circle cx="11" cy="13" r="1.3" fill="#9fd3f3"/></svg>
<svg class="nolcd" style="left:278px;top:297px" width="16" height="16" viewBox="0 0 16 16"><path d="M12 2.5 A6.3 6.3 0 1 0 12.5 13" fill="none" stroke="#a3a3a3" stroke-width="1.8"/><path d="M12 2.5L6 8L12.5 13" fill="none" stroke="#a3a3a3" stroke-width="0.8"/><circle cx="12" cy="2.5" r="1.3" fill="#9fd3f3"/><circle cx="6" cy="8" r="1.3" fill="#9fd3f3"/><circle cx="12.5" cy="13" r="1.3" fill="#9fd3f3"/></svg>
<svg class="nolcd" style="left:278px;top:320px" width="16" height="16" viewBox="0 0 16 16"><path d="M11.5 2 A6.3 6.3 0 0 0 2 11.5 A6.3 6.3 0 0 0 13 13" fill="none" stroke="#a3a3a3" stroke-width="1.8"/><circle cx="11.5" cy="2" r="1.3" fill="#9fd3f3"/><circle cx="2" cy="11.5" r="1.3" fill="#9fd3f3"/><circle cx="13" cy="13.3" r="1.3" fill="#9fd3f3"/></svg>
<svg class="nolcd" style="left:278px;top:343px" width="16" height="16" viewBox="0 0 16 16"><circle cx="8" cy="8" r="6.6" fill="#d4d4d4" stroke="#a3a3a3" stroke-width="1.8"/><path d="M8 8L6 1.5A6.6 6.6 0 0 0 2 11.5Z" fill="#fff"/><path d="M6 1.5L8 8L2 11.5" fill="none" stroke="#a3a3a3" stroke-width="0.8"/><circle cx="6" cy="1.5" r="1.3" fill="#9fd3f3"/><circle cx="8" cy="8" r="1.3" fill="#9fd3f3"/><circle cx="2" cy="11.5" r="1.3" fill="#9fd3f3"/></svg>
<svg class="nolcd" style="left:278px;top:366px" width="16" height="16" viewBox="0 0 16 16"><ellipse cx="8" cy="7.5" rx="7" ry="5.2" fill="none" stroke="#a3a3a3" stroke-width="1.8"/></svg>
<div class="a" style="left:275px;top:390px;width:23px;height:1px;background:#c8c8c8;"></div>
<svg class="nolcd" style="left:278px;top:397px" width="16" height="16" viewBox="0 0 16 16"><path d="M2 13.5 C6 14.5 6 9 8 6.5 C9.5 4 11 2 14 2" fill="none" stroke="#a3a3a3" stroke-width="1.6"/><circle cx="2" cy="13.5" r="1.5" fill="#9fd3f3"/><circle cx="14" cy="2" r="1.5" fill="#9fd3f3"/></svg>
<div class="a" style="left:275px;top:421px;width:23px;height:1px;background:#c8c8c8;"></div>
<svg class="nolcd" style="left:278px;top:428px" width="16" height="16" viewBox="0 0 16 16"><path d="M1 4.5V1.2H15V4.5M8 1.2V15M4.5 15H11.5" fill="none" stroke="#a3a3a3" stroke-width="2.2"/></svg>
<svg class="nolcd" style="left:278px;top:451px" width="16" height="16" viewBox="0 0 16 16"><rect x="0.75" y="0.75" width="14.5" height="14.5" fill="#fff" stroke="#a3a3a3" stroke-width="1.3"/><path d="M2.5 13.5V8L5.5 5L8 9L11 6L13.5 9V13.5Z" fill="#a3a3a3"/><rect x="3.5" y="3" width="3" height="1.5" fill="#a3a3a3"/></svg>
<svg class="nolcd" style="left:278px;top:474px" width="16" height="16" viewBox="0 0 16 16"><path d="M7 4.5L9.5 2 A2.6 2.6 0 0 1 14 6.5 L11.5 9 A2.6 2.6 0 0 1 7.5 9.2" fill="none" stroke="#a3a3a3" stroke-width="1.8"/><path d="M9 11.5L6.5 14 A2.6 2.6 0 0 1 2 9.5 L4.5 7 A2.6 2.6 0 0 1 8.5 6.8" fill="none" stroke="#a3a3a3" stroke-width="1.8"/></svg>
<div class="a" style="left:275px;top:498px;width:23px;height:1px;background:#c8c8c8;"></div>
<svg class="nolcd" style="left:278px;top:505px" width="16" height="16" viewBox="0 0 16 16"><path d="M0.6 4.4V11.7M15.4 4.4V11.7" stroke="#a3a3a3" stroke-width="1.2"/><path d="M1 7.8H15" stroke="#a3a3a3" stroke-width="1.8"/><path d="M1 7.8L4 5.8V9.8Z" fill="#a3a3a3"/><path d="M15 7.8L12 5.8V9.8Z" fill="#a3a3a3"/></svg>
<svg class="nolcd" style="left:278px;top:528px" width="16" height="16" viewBox="0 0 16 16"><path d="M10.2 0.3L15.8 5.6M0.3 10.2L5.6 15.5" stroke="#a3a3a3" stroke-width="1.3"/><path d="M4 11.8L12 4" stroke="#a3a3a3" stroke-width="1.6"/><path d="M3 12.9L3.6 8.6L7.3 12.2Z M13 3L8.7 3.6L12.3 7.2Z" fill="#a3a3a3"/></svg>
<svg class="nolcd" style="left:278px;top:551px" width="16" height="16" viewBox="0 0 16 16"><path d="M0.6 3.7V11.6M7.3 3.7V11.6M15.4 3.7V11.6" stroke="#a3a3a3" stroke-width="1.2"/><path d="M1 7.6H15" stroke="#a3a3a3" stroke-width="1.2"/><path d="M1 7.6L4 5.6V9.6Z" fill="#a3a3a3"/><path d="M7 7.6L4 5.6V9.6Z" fill="#a3a3a3"/><path d="M7.6 7.6L10.6 5.6V9.6Z" fill="#a3a3a3"/><path d="M15 7.6L12 5.6V9.6Z" fill="#a3a3a3"/></svg>
<svg class="nolcd" style="left:278px;top:574px" width="16" height="16" viewBox="0 0 16 16"><path d="M0.6 3.9V11.8M4.9 3.9V11.8M10.3 3.9V11.8M15.4 3.9V11.8" stroke="#a3a3a3" stroke-width="1.2"/><path d="M1 7.8H15" stroke="#a3a3a3" stroke-width="1.2"/><path d="M1 7.8L3 6.3V9.3Z M4.6 7.8L2.6 6.3V9.3Z M5.2 7.8L7.2 6.3V9.3Z M10 7.8L8 6.3V9.3Z M10.6 7.8L12.6 6.3V9.3Z M15 7.8L13 6.3V9.3Z" fill="#a3a3a3"/></svg>
<svg class="nolcd" style="left:278px;top:596px" width="16" height="16" viewBox="0 0 16 16"><path d="M0.5 3.3V14.7M15.3 3.3V14.7M9.6 8.9V14.7" stroke="#a3a3a3" stroke-width="1.2"/><path d="M1 5.9H15M1 12H9.4" stroke="#a3a3a3" stroke-width="1.4"/><path d="M1 5.9L4 3.9000000000000004V7.9Z" fill="#a3a3a3"/><path d="M15 5.9L12 3.9000000000000004V7.9Z" fill="#a3a3a3"/><path d="M1 12L4 10V14Z" fill="#a3a3a3"/><path d="M9.4 12L6.4 10V14Z" fill="#a3a3a3"/></svg>
<svg class="nolcd" style="left:278px;top:620px" width="16" height="16" viewBox="0 0 16 16"><path d="M0.5 1.2V15.2H15.4" fill="none" stroke="#a3a3a3" stroke-width="1.2"/><path d="M1.3 14.1L9.2 3" stroke="#a3a3a3" stroke-width="1" stroke-dasharray="1.3 0.9"/><path d="M9 3.5 Q13 6 13.3 11.5" fill="none" stroke="#a3a3a3" stroke-width="1.1"/><path d="M7.5 2.5L10.8 2.8L9.5 5.5Z" fill="#a3a3a3"/><path d="M11.3 10.5H15.3L13.3 13.5Z" fill="#a3a3a3"/></svg>
<svg class="nolcd" style="left:278px;top:643px" width="16" height="16" viewBox="0 0 16 16"><circle cx="6.1" cy="10.2" r="5.3" fill="none" stroke="#a3a3a3" stroke-width="1.8"/><circle cx="6.1" cy="10.2" r="0.9" fill="#a3a3a3"/><path d="M9.8 5.2L15.7 0.6" stroke="#a3a3a3" stroke-width="1.3"/><path d="M9.3 5.8L10.2 2.5L12.5 4.8Z" fill="#a3a3a3"/></svg>
<div class="a" style="left:271px;top:669px;width:32px;height:1px;background:#c8c8c8;"></div>
<div class="a" style="left:304px;top:116px;width:566px;height:661px;background:#f0f0f0;"></div>
<div class="a" style="left:304px;top:116px;width:566px;height:1px;background:#858585;"></div>
<div class="a" style="left:312px;top:124px;width:558px;height:1px;background:#fff;"></div>
<div class="a" style="left:312px;top:124px;width:1px;height:653px;background:#fff;"></div>
<div class="a" style="left:317px;top:129px;width:553px;height:648px;background:#fff;border-top:1px solid #9a9a9a;border-left:1px solid #9a9a9a;box-sizing:border-box"></div>
<div class="a" style="left:318px;top:130px;width:552px;height:1px;background:#646464;"></div>
<div class="a" style="left:318px;top:130px;width:1px;height:647px;background:#646464;"></div>
<svg style="left:776px;top:273px" width="94" height="480" viewBox="776 273 94 480"><defs><linearGradient id="rg" x1="0" y1="0" x2="0" y2="1"><stop offset="0" stop-color="#cc1217"/><stop offset="0.5" stop-color="#c51116"/><stop offset="1" stop-color="#a90f13"/></linearGradient><linearGradient id="refl" x1="0" y1="0" x2="0.3" y2="1"><stop offset="0" stop-color="#fff" stop-opacity="0.5"/><stop offset="1" stop-color="#fff" stop-opacity="0.08"/></linearGradient><clipPath id="rc"><rect x="776" y="273" width="94" height="480"/></clipPath></defs><rect x="776" y="273" width="94" height="480" fill="url(#rg)"/><g clip-path="url(#rc)" stroke="#fff" fill="none" stroke-width="1.1"><line x1="776" y1="283.2" x2="870" y2="371.6"/><line x1="788.3" y1="273.1" x2="870" y2="355.6"/><line x1="803.8" y1="273.1" x2="870" y2="343.9"/><line x1="838" y1="273.1" x2="870" y2="314.1"/><line x1="845.7" y1="273.1" x2="870" y2="305.4"/><line x1="776" y1="319.7" x2="870" y2="393"/><line x1="794.4" y1="334.6" x2="870" y2="334.6"/><line x1="794.4" y1="334.6" x2="794.4" y2="489"/><line x1="776" y1="396.3" x2="870" y2="444"/><line x1="776" y1="410" x2="855.1" y2="445.9"/><line x1="776" y1="418.8" x2="819.8" y2="437"/><line x1="776" y1="436.5" x2="870" y2="469.6"/><line x1="776" y1="439" x2="850" y2="466"/><line x1="776" y1="471.8" x2="855.1" y2="488.4"/><line x1="776" y1="486" x2="870" y2="502"/><line x1="819.8" y1="437" x2="819.8" y2="528.6"/><line x1="830.3" y1="423.8" x2="830.3" y2="515.3"/><line x1="855.1" y1="445.9" x2="855.1" y2="489.4"/><line x1="863.4" y1="495.5" x2="863.4" y2="572"/><line x1="792.2" y1="489.4" x2="792.2" y2="655.9"/><line x1="820.4" y1="545.1" x2="820.4" y2="587.5"/><line x1="806.6" y1="586" x2="806.6" y2="655.9"/><line x1="830.3" y1="423.8" x2="870" y2="423.8"/><line x1="794.4" y1="442.6" x2="870" y2="442.6"/><line x1="776" y1="446.4" x2="855.1" y2="446.4"/><line x1="776" y1="470.2" x2="870" y2="470.2"/><line x1="776" y1="489.4" x2="855.1" y2="489.4"/><line x1="776" y1="509.2" x2="870" y2="509.2"/><line x1="776" y1="525.3" x2="870" y2="525.3"/><line x1="776" y1="545.1" x2="820.4" y2="545.1"/><line x1="776" y1="586" x2="806.6" y2="586"/><line x1="776" y1="612.4" x2="806.6" y2="612.4"/><line x1="776" y1="623.3" x2="806.6" y2="623.3"/><line x1="776" y1="655.9" x2="806.6" y2="655.9"/><line x1="776" y1="512" x2="870" y2="519.2"/><line x1="776" y1="563.2" x2="852.6" y2="554.4"/><line x1="776" y1="594.1" x2="860" y2="572.6"/><line x1="776" y1="626.2" x2="845.8" y2="603"/><line x1="788" y1="630" x2="870" y2="603"/><line x1="776" y1="628.3" x2="792.2" y2="622.3"/><line x1="776" y1="635.5" x2="806.6" y2="623.3"/><line x1="776" y1="652.6" x2="845.7" y2="621.7"/><line x1="776" y1="657.5" x2="851" y2="623.3"/><line x1="776" y1="664.7" x2="860" y2="624.4"/><line x1="783.4" y1="752.8" x2="870" y2="680"/></g><g clip-path="url(#rc)" stroke="#f4c8c4" fill="none" stroke-width="1.3"><line x1="776" y1="357.7" x2="870" y2="357.7"/><line x1="819.8" y1="437" x2="870" y2="437"/><line x1="776" y1="494.3" x2="870" y2="494.3"/><line x1="776" y1="528.6" x2="870" y2="528.6"/><line x1="776" y1="572" x2="870" y2="572"/><line x1="776" y1="601.3" x2="845" y2="601.3"/><line x1="776" y1="637.7" x2="870" y2="637.7"/><line x1="776" y1="687.6" x2="870" y2="687.6"/><line x1="860.6" y1="572.6" x2="860.6" y2="687"/><line x1="776" y1="476.2" x2="852" y2="489.6"/></g><g clip-path="url(#rc)" stroke="#f2d0d0" fill="none" stroke-width="1.5" stroke-dasharray="4.5 3"><line x1="779.5" y1="391" x2="870" y2="391"/><line x1="779.5" y1="391" x2="779.5" y2="586.4"/><line x1="779.5" y1="586.4" x2="870" y2="586.4"/><line x1="852.7" y1="454.7" x2="870" y2="454.7"/><line x1="852.7" y1="454.7" x2="852.7" y2="562.1"/><line x1="852.7" y1="562.1" x2="870" y2="562.1"/></g><path d="M870 562 L845 606 Q839 618 850 620.6 L870 620.6Z" fill="#fff"/><path d="M868 596 Q866 600 869 605 L870 605 L870 595Z" fill="#c8101a"/><path d="M842 624 L870 624 L870 680 Z" fill="url(#refl)"/></svg>
</body>
</html>
